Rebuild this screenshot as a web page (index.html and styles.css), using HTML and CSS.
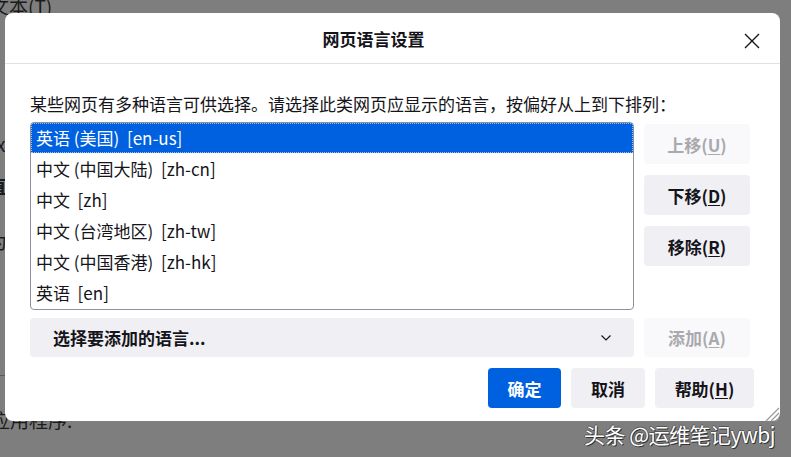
FILE: index.html
```html
<!DOCTYPE html>
<html>
<head>
    <meta charset="UTF-8">
    <title>网页语言设置</title>
    <link rel="stylesheet" href="styles.css">
</head>
<body>
    <div class="page">
        <div class="page-line first">文本(T)</div>
        <div class="page-line l2">x</div>
        <div class="page-line l3">直</div>
        <div class="page-line l4">为</div>
        <div class="page-line l5">、</div>
        <div class="page-rule"></div>
        <div class="page-line l6">应用程序.</div>
    </div>

    <div class="dialog">
        <div class="dialog-header">
            <span class="dialog-title">网页语言设置</span>
            <span class="close">
                <svg width="16" height="16" viewBox="0 0 16 16"><path d="M1 1L15 15M15 1L1 15" stroke="#15141a" stroke-width="1.4" fill="none"/></svg>
            </span>
        </div>

        <div class="dialog-body">
            <p class="intro">某些网页有多种语言可供选择。请选择此类网页应显示的语言，按偏好从上到下排列：</p>

            <div class="row">
                <div class="listbox">
                    <div class="item selected">英语 (美国)&nbsp; [en-us]</div>
                    <div class="item">中文 (中国大陆)&nbsp; [zh-cn]</div>
                    <div class="item">中文&nbsp; [zh]</div>
                    <div class="item">中文 (台湾地区)&nbsp; [zh-tw]</div>
                    <div class="item">中文 (中国香港)&nbsp; [zh-hk]</div>
                    <div class="item">英语&nbsp; [en]</div>
                </div>
                <div class="side">
                    <button class="btn disabled">上移(<u>U</u>)</button>
                    <button class="btn">下移(<u>D</u>)</button>
                    <button class="btn">移除(<u>R</u>)</button>
                </div>
            </div>

            <div class="row add-row">
                <div class="select">
                    <span>选择要添加的语言...</span>
                    <svg width="12" height="8" viewBox="0 0 12 8"><path d="M1.5 1.5L6 6L10.5 1.5" stroke="#15141a" stroke-width="1.2" fill="none"/></svg>
                </div>
                <button class="btn disabled">添加(<u>A</u>)</button>
            </div>
        </div>

        <div class="dialog-footer">
            <button class="btn primary ok">确定</button>
            <button class="btn cancel">取消</button>
            <button class="btn help">帮助(<u>H</u>)</button>
        </div>

        <span class="grip">
            <svg width="18" height="18" viewBox="0 0 18 18"><path d="M17 4L4 17M17 9L9 17M17 14L14 17" stroke="#9a9a9a" stroke-width="1.2" fill="none"/></svg>
        </span>
    </div>

    <div class="watermark">头条 @运维笔记ywbj</div>
</body>
</html>
```

FILE: styles.css
```css
body { margin: 0; width: 791px; height: 457px; overflow: hidden; background: #7e7e7e; font-family: "Microsoft YaHei", "Noto Sans CJK SC", "Noto Sans", sans-serif; color: #15141a; position: relative; }

.page { padding-top: 0; color: #1b1b1b; font-size: 19px; }
.page-line { margin-left: -10px; height: 20px; line-height: 20px; }
.page-line.first { margin-top: -4px; }
.page-line.l2 { margin-left: -4px; margin-top: 118px; }
.page-line.l3 { margin-left: -12px; margin-top: 22px; font-weight: bold; }
.page-line.l4 { margin-left: -12px; margin-top: 35px; }
.page-line.l5 { margin-left: -14px; margin-top: 30px; }
.page-rule { margin-top: 74px; height: 1px; background: #5a5a5a; width: 10px; }
.page-line.l6 { margin-top: 34px; margin-left: -9px; }

.dialog { position: absolute; left: 5px; top: 13px; width: 775px; height: 408px; background: #fff; border-radius: 8px; box-sizing: border-box; }

.dialog-header { height: 50px; border-bottom: 1px solid #e0e0e6; display: flex; align-items: center; justify-content: center; padding-right: 38px; position: relative; }
.dialog-title { font-size: 17px; font-weight: bold; }
.close { position: absolute; right: 20px; top: 17px; width: 16px; height: 16px; }

.dialog-body { padding: 29px 30px 0 25px; }
.intro { margin: 0 0 7px 0; font-size: 17px; line-height: 22px; white-space: nowrap; }

.row { display: flex; gap: 10px; }
.listbox { width: 604px; height: 188px; border: 1px solid #8f8f9d; border-radius: 4px; box-sizing: border-box; overflow: hidden; }
.item { height: 31px; line-height: 31px; padding-left: 5px; font-size: 17px; white-space: nowrap; }
.item.selected { background: #0061e0; color: #fff; height: 30px; line-height: 30px; outline: 1px dotted #9fbce8; outline-offset: -1px; }

.side { display: flex; flex-direction: column; gap: 11px; padding-top: 2px; }

.btn { width: 106px; height: 40px; border: none; border-radius: 4px; background: #f0f0f4; color: #15141a; font-family: inherit; font-size: 17px; font-weight: bold; padding: 0; }
.btn u { text-underline-offset: 2px; }
.btn.disabled { background: #f9f9fb; color: #a9a9ae; }

.add-row { margin-top: 8px; }
.select { width: 604px; height: 39px; border-radius: 4px; background: #f0f0f4; display: flex; align-items: center; justify-content: space-between; padding: 0 22px 0 23px; box-sizing: border-box; font-size: 17px; font-weight: bold; }
.add-row .btn { height: 39px; }

.dialog-footer { display: flex; justify-content: flex-end; gap: 10px; padding: 11px 26px 0 0; }
.btn.primary { background: #0061e0; color: #fff; }
.btn.ok { width: 73px; }
.btn.cancel { width: 74px; }
.btn.help { width: 99px; }

.grip { position: absolute; right: 0; bottom: 0; width: 18px; height: 18px; }

.watermark { position: absolute; left: 584px; top: 419px; color: #fff; font-size: 21px; text-shadow: 1px 1px 0 #333, -1px 0 0 #555, 0 -1px 0 #555; white-space: nowrap; letter-spacing: -0.5px; }
```
